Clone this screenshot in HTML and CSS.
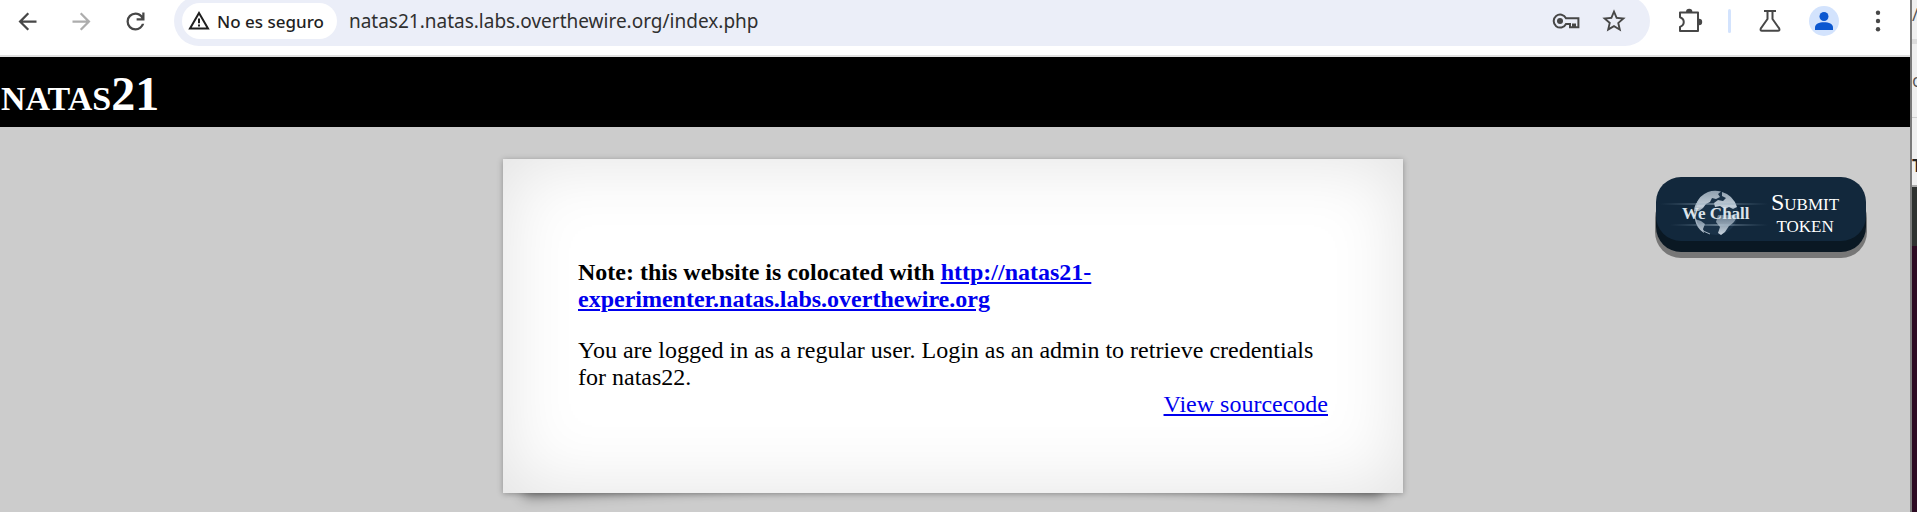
FILE: index.html
```html
<!DOCTYPE html>
<html lang="es">
<head>
<meta charset="utf-8">
<title>natas21</title>
<link rel="stylesheet" href="styles.css">
</head>
<body>
<div class="desktop">
  <div class="browser">
    <div class="toolbar">
      <button class="tool" type="button" aria-label="Atrás"><svg width="27" height="27" viewBox="0 0 24 24"><path d="M20 11H7.83l5.59-5.59L12 4l-8 8 8 8 1.41-1.41L7.83 13H20z"/></svg></button>
      <button class="tool tool-off" type="button" aria-label="Adelante"><svg width="27" height="27" viewBox="0 0 24 24"><path d="M12 4l-1.41 1.41L16.17 11H4v2h12.17l-5.58 5.59L12 20l8-8z"/></svg></button>
      <button class="tool" type="button" aria-label="Recargar"><svg width="27" height="27" viewBox="0 0 24 24"><path d="M12 20q-3.35 0-5.675-2.325T4 12t2.325-5.675T12 4q1.725 0 3.3.7125T18 6.75V4h2v7h-7V9h4.2q-.8-1.4-2.1875-2.2T12 6Q9.5 6 7.750 7.750T6 12t1.750 4.250T12 18q1.925 0 3.475-1.100T17.65 14h2.100q-.7 2.650-2.850 4.325T12 20z"/></svg></button>
      <div class="omnibox">
        <button class="chip" type="button"><svg width="22" height="22" viewBox="0 0 22 22"><path class="line dark" d="M11 3 20 18.500H2z"/><path class="line dark" d="M11 8.500v4.800M11 14.500v2"/></svg>No es seguro</button>
        <input class="url" type="text" aria-label="Dirección" value="natas21.natas.labs.overthewire.org/index.php">
        <button class="tool tool-in" type="button" aria-label="Contraseñas"><svg width="28" height="20" viewBox="0 0 28 20"><circle cx="8" cy="10" r="3"/><path class="line" d="M14 7.200A6.500 6.500 0 1 0 14 13h4v3.200h3V13.500h2v2.700h3.400V7.200z"/></svg></button>
        <button class="tool tool-in" type="button" aria-label="Marcador"><svg width="28" height="28" viewBox="0 0 24 24"><path d="M22 9.240l-7.190-.62L12 2 9.190 8.630 2 9.240l5.460 4.730L5.820 21 12 17.270 18.180 21l-1.630-7.030zM12 15.400l-3.760 2.270 1-4.280-3.320-2.880 4.380-.38L12 6.100l1.710 4.040 4.380.38-3.320 2.880 1 4.280z"/></svg></button>
      </div>
      <button class="tool" type="button" aria-label="Extensiones"><svg width="28" height="28" viewBox="0 0 28 28"><path class="line" d="M4 5.600h18v18.500H4v-4.200c5-1.700 5-8 0-9.700z" stroke-linejoin="round"/><path d="M10 5a3.200 3.200 0 0 1 6.400 0zM23 11.800a3.100 3.100 0 0 1 0 6.400z"/></svg></button>
      <span class="divider"></span>
      <button class="tool" type="button" aria-label="Experimentos"><svg width="28" height="28" viewBox="0 0 28 28"><path class="line" d="M8 4h12M11.500 4v8L4.800 21.500Q4 23.700 6 23.700h16q2 0 1.200-2.200L16.500 12V4"/></svg></button>
      <button class="tool" type="button" aria-label="Perfil"><svg width="30" height="30" viewBox="0 0 30 30"><circle cx="15" cy="15" r="15" fill="#d3e3fd"/><g fill="#0b57d0"><circle cx="15" cy="10.500" r="4.500"/><path d="M6 24v-2.500C6 18 10 16.200 15 16.200s9 1.800 9 5.300V24z"/></g></svg></button>
      <button class="tool" type="button" aria-label="Menú"><svg width="28" height="28" viewBox="0 0 28 28"><circle cx="14" cy="5.700" r="2.200"/><circle cx="14" cy="14" r="2.200"/><circle cx="14" cy="22.300" r="2.200"/></svg></button>
    </div>
    <main class="page">
      <h1 class="title">natas21</h1>
      <div class="stage">
        <section class="card">
          <p class="note">Note: this website is colocated with <a href="#experimenter">http://natas21-experimenter.natas.labs.overthewire.org</a></p>
          <p>You are logged in as a regular user. Login as an admin to retrieve credentials for natas22.</p>
          <div class="source"><a href="#source">View sourcecode</a></div>
        </section>
        <button class="submit" type="button">
          <svg class="logo" width="120" height="50" viewBox="-2 0 120 50" aria-hidden="true">
            <defs>
              <linearGradient id="flare"><stop offset="0" stop-color="#7893aa" stop-opacity="0"/><stop offset=".5" stop-color="#a9bccb"/><stop offset="1" stop-color="#7893aa" stop-opacity="0"/></linearGradient>
              <linearGradient id="land" x2="0" y2="1"><stop offset="0" stop-color="#8fa0af"/><stop offset=".35" stop-color="#c3ced8"/><stop offset=".55" stop-color="#63788b"/><stop offset="1" stop-color="#c8d3de"/></linearGradient>
            </defs>
            <circle cx="58" cy="25" r="22" fill="#1a3248"/>
            <path transform="translate(2 0)" d="M36 16Q40 7 48 4Q54 2 61 3.500L58 6 60 9 56 11 52 10 50 14 46 16 43 20 39 23H34Q34 19 36 16zM62 4Q73 7 77 19L73 21 69 19 65 21 60 18 55 19 54 15 58 12 63 13 66 10 62 8zM35 31 41 33 45 36 43 41 44 45Q36 40 35 31zM58 27H76Q77 31 73 35L69 38 65 44 61 47 58 45 60 39 56 34z" fill="url(#land)"/>
            <path d="M41 12Q36 19 37 29Q39 42 52 46" fill="none" stroke="#a8b7c5" stroke-width="1"/>
            <rect x="2" y="15" width="108" height="2" fill="url(#flare)" opacity=".5"/>
            <rect x="12" y="36" width="98" height="2" fill="url(#flare)" opacity=".5"/>
            <text class="brand" x="24" y="31">We Chall</text>
          </svg>
          <span>Submit<br>token</span>
        </button>
      </div>
    </main>
  </div>
  <aside class="behind" aria-hidden="true">
    <div class="behind-tab">/</div>
    <div class="behind-bar">o</div>
    <div class="behind-head">T</div>
    <div class="behind-menu"></div>
    <div class="behind-term"></div>
  </aside>
</div>
</body>
</html>
```
FILE: styles.css
```css
* { box-sizing: border-box; }
body {
  margin: 0;
  font-family: "Liberation Serif", "Times New Roman", serif;
  font-size: 24px;
  line-height: 27px;
  color: #000;
}
button { border: 0; padding: 0; background: none; font: inherit; cursor: pointer; }
a { color: #00e; }

.desktop { display: flex; min-height: 100vh; overflow: hidden; }
.browser {
  flex: 1;
  min-width: 0;
  display: flex;
  flex-direction: column;
  border-right: 2px solid #7b7b7b;
}

/* Browser toolbar */
.toolbar {
  display: flex;
  align-items: center;
  height: 57px;
  padding: 0 5px 13px 0;
  border-bottom: 2px solid #e0e0e0;
  background: #fff;
  font-family: "Noto Sans", "Open Sans", sans-serif;
}
.tool {
  flex: none;
  display: grid;
  place-items: center;
  width: 54px;
  height: 40px;
}
.tool svg { fill: #474747; }
.tool-off svg { fill: #adadad; }
.tool-in { width: 48px; }
.line { fill: none; stroke: #474747; stroke-width: 2; }
.dark { stroke: #1f1f1f; }
.omnibox {
  flex: 1;
  display: flex;
  align-items: center;
  height: 50px;
  margin: 0 13px 0 12px;
  padding: 0 12px 0 8px;
  border-radius: 25px;
  background: #ebeef8;
}
.chip {
  flex: none;
  display: flex;
  align-items: center;
  gap: 7px;
  height: 36px;
  padding: 0 13px 0 6px;
  border-radius: 18px;
  background: #fff;
  color: #1f1f1f;
  font-size: 17px;
  font-weight: 500;
}
.url {
  flex: 1;
  min-width: 0;
  margin-left: 12px;
  padding: 0;
  border: 0;
  outline: 0;
  background: none;
  color: #303030;
  font: 19px "Noto Sans", "Open Sans", sans-serif;
}
.divider {
  flex: none;
  width: 3px;
  height: 24px;
  margin: 0 12px 0 11px;
  border-radius: 2px;
  background: #d3e3fd;
}

/* Page */
.page { flex: 1; background: #ccc; }
.title {
  margin: 0;
  padding: 10px 1px 6px;
  background: #000;
  color: #fff;
  font-size: 48px;
  line-height: 54px;
  font-variant: small-caps;
}
.stage {
  isolation: isolate;
  display: grid;
  grid-template-columns: 1fr 900px 1fr;
  align-items: start;
  padding: 32px 44px 20px 40px;
}
.card {
  grid-column: 2;
  position: relative;
  padding: 76px 75px 75px;
  background: #fff;
  box-shadow: 0 1px 6px rgba(0, 0, 0, .3), inset 0 0 75px rgba(0, 0, 0, .12);
}
/* Curled lower corners */
.card::before,
.card::after {
  content: "";
  position: absolute;
  z-index: -1;
  bottom: 14px;
  width: 50%;
  height: 20%;
  box-shadow: 0 18px 14px rgba(0, 0, 0, .45);
}
.card::before { left: 20px; transform: rotate(-3deg); transform-origin: 0 100%; }
.card::after { right: 20px; transform: rotate(3deg); transform-origin: 100% 100%; }
.card p { margin: 24px 0; }
.card p:nth-of-type(2) { margin-bottom: 0; }
.note { font-weight: bold; }
.source { text-align: right; }

.submit {
  justify-self: end;
  display: flex;
  align-items: center;
  width: 210px;
  height: 64px;
  margin-top: 18px;
  padding-top: 8px;
  border-radius: 25px;
  background: #12283c;
  box-shadow: 0 11px 0 #0a1823, 0 16px 0 1px #777;
  color: #fff;
  line-height: 22px;
  font-variant: small-caps;
  text-align: center;
}
.logo { flex: none; margin-right: -5px; }
.brand {
  fill: #dbe3ea;
  font-size: 17px;
  font-weight: bold;
  font-variant: normal;
}

/* Edge of the window behind */
.behind {
  flex: none;
  display: flex;
  flex-direction: column;
  width: 5px;
  overflow: hidden;
  background: #f0f0f0;
  color: #555;
  font-family: "Open Sans", sans-serif;
  font-size: 18px;
}
.behind-tab { height: 44px; padding-top: 1px; border-bottom: 5px solid #dcdcdc; }
.behind-bar { height: 74px; padding-top: 23px; border-bottom: 1px solid #d0d0d0; }
.behind-head { height: 69px; padding-top: 34px; border-bottom: 2px solid #aaa; color: #222; font-weight: bold; }
.behind-menu { height: 59px; background: #2f3230; }
.behind-term { flex: 1; background: #2c0a22; }
```
